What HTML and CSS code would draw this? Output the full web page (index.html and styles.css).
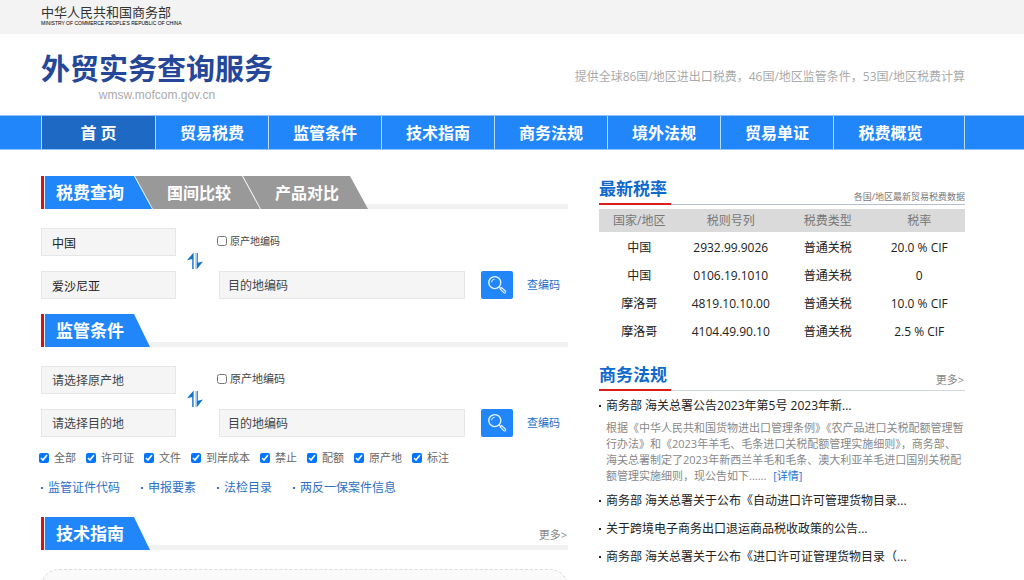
FILE: index.html
```html
<!DOCTYPE html>
<html lang="zh-CN">
<head>
<meta charset="utf-8">
<title>外贸实务查询服务</title>
<link rel="stylesheet" href="styles.css">
</head>
<body>
<div class="topbar wrap">
  <a class="ministry" href="#"><span class="ministry-cn">中华人民共和国商务部</span><span class="ministry-en">MINISTRY OF COMMERCE PEOPLE'S REPUBLIC OF CHINA</span></a>
</div>
<header class="header wrap">
  <div class="brand">
    <h1 class="brand-title">外贸实务查询服务</h1>
    <span class="brand-url">wmsw.mofcom.gov.cn</span>
  </div>
  <p class="slogan">提供全球86国/地区进出口税费，46国/地区监管条件，53国/地区税费计算</p>
</header>
<nav class="nav wrap">
  <div class="nav-list">
    <a class="nav-item active" href="#">首 页</a>
    <a class="nav-item" href="#">贸易税费</a>
    <a class="nav-item" href="#">监管条件</a>
    <a class="nav-item" href="#">技术指南</a>
    <a class="nav-item" href="#">商务法规</a>
    <a class="nav-item" href="#">境外法规</a>
    <a class="nav-item" href="#">贸易单证</a>
    <a class="nav-item" href="#">税费概览</a>
  </div>
</nav>
<main class="main wrap">
  <div class="left">
    <div class="tabs">
      <button class="tab tab-main" type="button">税费查询</button>
      <button class="tab tab-sub" type="button">国间比较</button>
      <button class="tab tab-sub" type="button">产品对比</button>
    </div>
    <form class="query">
      <input class="field" type="text" value="中国" aria-label="原产地">
      <svg class="swap" viewBox="0 0 16 18" width="16" height="18" aria-hidden="true"><path d="M0 8.2 6.6 0.6V17H5.2V7Z M9.6 1H10.8V10.8L16 9.4 9.6 17.4Z" fill="#1273cc"/><path d="M8.4 1H9.2V17H8.4Z" fill="#8fc2ec"/></svg>
      <label class="origin origin-small"><input class="check" type="checkbox">原产地编码</label>
      <input class="field to" type="text" value="爱沙尼亚" aria-label="目的地">
      <input class="field code" type="text" placeholder="目的地编码" aria-label="目的地编码">
      <button class="search" type="button" aria-label="查询"><svg viewBox="0 0 20 20" width="20" height="20" fill="none" stroke="#e6f3ff"><circle cx="7.8" cy="7.6" r="6" stroke-width="1.4"/><path d="M4.4 7.4A3.6 3.6 0 0 1 7.6 4.2" stroke-width="1"/><path d="m12 11.8 1.4 1.4" stroke-width="1.3"/><path d="m13.2 14 1.4-1.4 3.7 3.4a1 1 0 0 1-1.5 1.6Z" stroke-width="1.1"/></svg></button>
      <a class="lookup" href="#">查编码</a>
    </form>
    <div class="tabs">
      <h2 class="tab tab-main tab-alone">监管条件</h2>
    </div>
    <form class="query query-rules">
      <input class="field" type="text" placeholder="请选择原产地" aria-label="原产地">
      <svg class="swap" viewBox="0 0 16 18" width="16" height="18" aria-hidden="true"><path d="M0 8.2 6.6 0.6V17H5.2V7Z M9.6 1H10.8V10.8L16 9.4 9.6 17.4Z" fill="#1273cc"/><path d="M8.4 1H9.2V17H8.4Z" fill="#8fc2ec"/></svg>
      <label class="origin"><input class="check" type="checkbox">原产地编码</label>
      <input class="field to" type="text" placeholder="请选择目的地" aria-label="目的地">
      <input class="field code" type="text" placeholder="目的地编码" aria-label="目的地编码">
      <button class="search" type="button" aria-label="查询"><svg viewBox="0 0 20 20" width="20" height="20" fill="none" stroke="#e6f3ff"><circle cx="7.8" cy="7.6" r="6" stroke-width="1.4"/><path d="M4.4 7.4A3.6 3.6 0 0 1 7.6 4.2" stroke-width="1"/><path d="m12 11.8 1.4 1.4" stroke-width="1.3"/><path d="m13.2 14 1.4-1.4 3.7 3.4a1 1 0 0 1-1.5 1.6Z" stroke-width="1.1"/></svg></button>
      <a class="lookup" href="#">查编码</a>
    </form>
    <div class="filters">
      <label class="filter"><input class="check" type="checkbox" checked>全部</label>
      <label class="filter"><input class="check" type="checkbox" checked>许可证</label>
      <label class="filter"><input class="check" type="checkbox" checked>文件</label>
      <label class="filter"><input class="check" type="checkbox" checked>到岸成本</label>
      <label class="filter"><input class="check" type="checkbox" checked>禁止</label>
      <label class="filter"><input class="check" type="checkbox" checked>配额</label>
      <label class="filter"><input class="check" type="checkbox" checked>原产地</label>
      <label class="filter"><input class="check" type="checkbox" checked>标注</label>
    </div>
    <div class="quick">
      <a class="dot" href="#">监管证件代码</a>
      <a class="dot" href="#">申报要素</a>
      <a class="dot" href="#">法检目录</a>
      <a class="dot" href="#">两反一保案件信息</a>
    </div>
    <div class="tabs">
      <h2 class="tab tab-main tab-alone">技术指南</h2>
      <a class="more" href="#">更多&gt;</a>
    </div>
    <div class="guide"></div>
  </div>
  <div class="right">
    <section class="rates">
      <div class="head">
        <h2 class="head-title">最新税率</h2>
        <span class="head-note">各国/地区最新贸易税费数据</span>
      </div>
      <table class="table">
        <colgroup><col class="c1"><col class="c2"><col class="c3"><col class="c4"></colgroup>
        <thead><tr><th>国家/地区</th><th>税则号列</th><th>税费类型</th><th>税率</th></tr></thead>
        <tbody>
          <tr><td>中国</td><td>2932.99.9026</td><td>普通关税</td><td>20.0 % CIF</td></tr>
          <tr><td>中国</td><td>0106.19.1010</td><td>普通关税</td><td>0</td></tr>
          <tr><td>摩洛哥</td><td>4819.10.10.00</td><td>普通关税</td><td>10.0 % CIF</td></tr>
          <tr><td>摩洛哥</td><td>4104.49.90.10</td><td>普通关税</td><td>2.5 % CIF</td></tr>
        </tbody>
      </table>
    </section>
    <section class="laws">
      <div class="head head-laws">
        <h2 class="head-title">商务法规</h2>
        <a class="head-more" href="#">更多&gt;</a>
      </div>
      <a class="dot law" href="#">商务部 海关总署公告2023年第5号 2023年新...</a>
      <p class="summary">根据《中华人民共和国货物进出口管理条例》《农产品进口关税配额管理暂<br>行办法》和《2023年羊毛、毛条进口关税配额管理实施细则》，商务部、<br>海关总署制定了2023年新西兰羊毛和毛条、澳大利亚羊毛进口国别关税配<br>额管理实施细则，现公告如下...... <a class="detail" href="#">[详情]</a></p>
      <a class="dot law" href="#">商务部 海关总署关于公布《自动进口许可管理货物目录...</a>
      <a class="dot law" href="#">关于跨境电子商务出口退运商品税收政策的公告...</a>
      <a class="dot law" href="#">商务部 海关总署关于公布《进口许可证管理货物目录（...</a>
    </section>
  </div>
</main>
</body>
</html>
```

FILE: styles.css
```css
* { box-sizing: border-box; }

body {
  margin: 0;
  height: 100vh;
  overflow: hidden;
  background: #fff;
  color: #222;
  font: 12px/16px "Open Sans", "Noto Sans CJK SC", sans-serif;
}

h1, h2, p { margin: 0; }
a { text-decoration: none; }
input, button { font: inherit; }

.wrap { padding-left: 41px; padding-right: 59px; }

.topbar {
  height: 34px;
  padding-top: 5px;
  background: #f3f3f3;
}

.ministry {
  display: flex;
  flex-direction: column;
  color: #333;
  white-space: nowrap;
}

.ministry-cn { font-size: 13px; line-height: 15px; }

.ministry-en {
  color: #000;
  font: 5px/7px "Liberation Sans", Arial, sans-serif;
}

.header {
  display: flex;
  justify-content: space-between;
  align-items: center;
  height: 81px;
  padding-top: 5px;
}

.brand {
  display: flex;
  flex-direction: column;
  align-items: center;
}

.brand-title {
  color: #24479a;
  font-size: 29px;
  line-height: 36px;
  font-weight: 700;
}

.brand-url {
  color: #aaa;
  font: 12px/16px "Liberation Sans", Arial, sans-serif;
}

.slogan { color: #aaa; }

.nav {
  height: 35px;
  background: #2286fb;
  border-top: 1px solid #8fc3fd;
  border-bottom: 1px solid #8fc3fd;
}

.nav-list {
  display: flex;
  height: 33px;
  border-left: 1px solid #b9dafd;
  border-right: 1px solid #b9dafd;
}

.nav-item {
  width: 113px;
  border-right: 1px solid #b9dafd;
  color: #fff;
  font-size: 16px;
  font-weight: 700;
  line-height: 34px;
  text-align: center;
}

.nav-item.active { width: 114px; background: #1e69c3; }
.nav-item:last-child { border-right: 0; }

.main {
  display: grid;
  grid-template-columns: 527fr 366fr;
  gap: 31px;
  padding-top: 26px;
}

.tabs {
  display: flex;
  align-items: flex-end;
  height: 33px;
  border-left: 3px solid #cf121b;
  background: linear-gradient(#f1f1f1, #f1f1f1) bottom / 100% 5px no-repeat;
}

.tab {
  height: 33px;
  border: 0;
  padding: 0;
  color: #fff;
  font-size: 16px;
  font-weight: 700;
  line-height: 34px;
  text-align: left;
}

.tab-main {
  width: 107px;
  margin-left: 1px;
  padding-left: 11px;
  background: #2286fb;
  font-size: 17px;
  clip-path: polygon(0 0, 89px 0, 100% 100%, 0 100%);
}

.tab-alone { width: 105px; }

.tab-sub {
  width: 125px;
  margin-left: -17px;
  padding-left: 32px;
  background: #999;
  clip-path: polygon(0 0, 107px 0, 100% 100%, 18px 100%);
}

.query {
  display: grid;
  grid-template-columns: 135px 43px 1fr 32px 55px;
  grid-template-rows: 28px 28px;
  row-gap: 15px;
  margin: 19px 0 15px;
}

.query-rules { margin-bottom: 13px; }

.field {
  width: 100%;
  height: 28px;
  border: 1px solid #e6e6e6;
  padding: 1px 10px 0;
  background: #f5f5f5;
  color: #222;
}

.field::placeholder { color: #444; opacity: 1; }

.swap {
  grid-row: 1 / 3;
  grid-column: 2;
  align-self: center;
  margin: 0 0 6px 11px;
}

.origin {
  display: flex;
  grid-row: 1;
  grid-column: 3 / 6;
  align-items: center;
  gap: 3px;
  margin-left: -2px;
  padding-bottom: 2px;
  color: #444;
  font-size: 11px;
}

.origin-small { font-size: 10px; }
.check { width: 10px; height: 10px; margin: 0; }
.to { grid-row: 2; grid-column: 1; }

.code {
  grid-row: 2;
  grid-column: 3;
  width: calc(100% - 16px);
  padding-left: 8px;
}

.search {
  display: grid;
  place-items: center;
  grid-row: 2;
  grid-column: 4;
  border: 0;
  border-radius: 2px;
  padding: 0;
  background: #2286fb;
}

.lookup {
  grid-row: 2;
  grid-column: 5;
  align-self: center;
  justify-self: end;
  margin-right: 8px;
  color: #1a6fc9;
  font-size: 11px;
  white-space: nowrap;
}

.filters {
  display: flex;
  gap: 10px;
  margin-left: -2px;
  color: #666;
  font-size: 11px;
}

.filter { display: flex; align-items: center; gap: 5px; }

.quick {
  display: flex;
  gap: 21px;
  margin: 14px 0 21px;
  color: #2f6fc4;
}

.dot {
  display: flex;
  align-items: center;
  gap: 5px;
  color: inherit;
  white-space: nowrap;
}

.dot::before {
  content: "";
  width: 2px;
  height: 2px;
  background: currentColor;
}

.more {
  margin-left: auto;
  padding: 0 1px 7px 0;
  color: #888;
  font-size: 11px;
}

.guide {
  height: 60px;
  margin-top: 19px;
  border: 1px dashed #ddd;
  border-radius: 18px;
  background: #fafafa;
}

.head {
  display: flex;
  justify-content: space-between;
  align-items: flex-end;
  height: 29px;
  border-bottom: 1px solid #b3bfd0;
}

.head-title {
  width: 72px;
  height: 29px;
  margin-bottom: -1px;
  border-bottom: 2px solid #dd1c1c;
  color: #0f6acb;
  font-size: 17px;
  line-height: 25px;
}

.head-note { color: #777; font-size: 9px; line-height: 14px; }
.head-more { padding-right: 1px; color: #888; font-size: 11px; padding-bottom: 2px; }

.table {
  width: 100%;
  margin-top: 4px;
  border-collapse: collapse;
  table-layout: fixed;
  text-align: center;
}

.c1 { width: 22%; }
.c2 { width: 28%; }
.c3 { width: 25%; }
.c4 { width: 25%; }

.table th {
  height: 23px;
  padding: 0;
  background: #dadada;
  color: #777;
  font-weight: 400;
}

.table td { height: 28px; padding: 3px 0 0; }

.laws { margin-top: 18px; }
.head-laws { margin-bottom: 1px; border-bottom-color: #d0d8e2; }
.law { height: 28px; }

.summary {
  margin: 0 0 3px;
  padding-left: 7px;
  color: #888;
  font-size: 11px;
  line-height: 16px;
  white-space: nowrap;
}

.detail { margin-left: 4px; color: #1a73d9; }
```
